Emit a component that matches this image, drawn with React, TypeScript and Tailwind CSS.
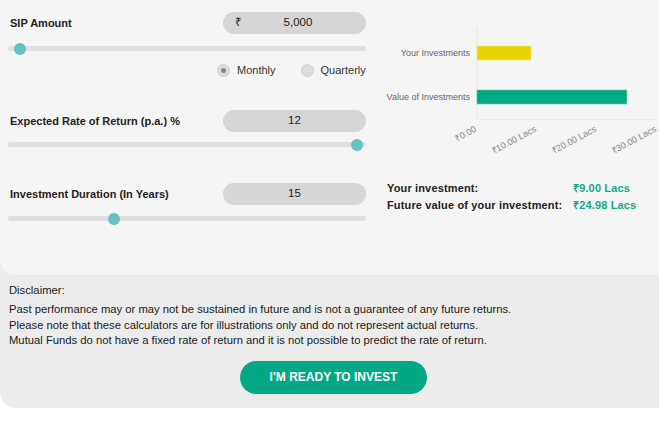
import React from 'react';

const font = { fontFamily: '"Liberation Sans", Arial, sans-serif' };

// thumb centre, px from the track's left edge
const Slider = ({ at }: { at: number }) => (
  <div className="relative h-[5px] w-[358px] rounded-full bg-[#e0e0e0]">
    <div
      className="absolute top-[-3.5px] h-[12px] w-[12px] rounded-full bg-[#62c3c1]"
      style={{ left: at - 6 }}
    />
  </div>
);

const Pill = ({ value, rupee }: { value: string; rupee?: boolean }) => (
  <div className="flex h-[22px] w-[143px] items-center rounded-full bg-[#d6d6d6] px-[12px] text-[11.5px] text-[#222]">
    {rupee && <span>₹</span>}
    <span className="flex-1 text-center">{value}</span>
  </div>
);

const Row = ({ label, children }: { label: string; children: React.ReactNode }) => (
  <div className="flex h-[22px] items-center justify-between">
    <span className="pl-[2px] text-[11px] font-bold text-[#222]">{label}</span>
    {children}
  </div>
);

const Radio = ({ label, checked }: { label: string; checked?: boolean }) => (
  <label className="flex items-center gap-[7px] text-[11px] text-[#333]">
    <span className="flex h-[13px] w-[13px] items-center justify-center rounded-full border border-[#cfcfcf] bg-[#dcdcdc]">
      {checked && <span className="h-[5px] w-[5px] rounded-full bg-[#888]" />}
    </span>
    {label}
  </label>
);

const Chart = () => {
  const x0 = 107;
  const per10 = 60;
  const ticks = ['₹0.00', '₹10.00 Lacs', '₹20.00 Lacs', '₹30.00 Lacs'];
  return (
    <svg width="289" height="160" className="block">
      <line x1={x0} y1={27} x2={x0} y2={119} stroke="#e6e6e6" strokeWidth="1" />
      <line x1={x0} y1={119.5} x2={289} y2={119.5} stroke="#ececec" strokeWidth="1" />
      <rect x={x0} y={46} width={(9.0 / 10) * per10} height={14} fill="#e8d400" stroke="#f0e37a" strokeWidth="0.6" />
      <rect x={x0} y={90} width={(24.98 / 10) * per10} height={14} fill="#00a884" stroke="#5fc9ad" strokeWidth="0.6" />
      <g fill="#666" fontSize="9" style={font}>
        <text x={100} y={56} textAnchor="end">Your Investments</text>
        <text x={100} y={100} textAnchor="end">Value of Investments</text>
        {ticks.map((t, i) => {
          const x = x0 + i * per10;
          return (
            <text key={t} x={x} y={131} textAnchor="end" fill="#888" transform={`rotate(-28 ${x} 131)`}>
              {t}
            </text>
          );
        })}
      </g>
    </svg>
  );
};

export default function App() {
  return (
    <div className="h-[421px] w-[659px] overflow-hidden bg-white" style={font}>
      <div className="w-[672px] rounded-b-[16px] bg-[#ececec] pb-[14px]">
        <div className="flex h-[275px] rounded-b-[16px] bg-[#f5f5f5]">
          <div className="ml-[8px] w-[358px] pt-[12px]">
            <Row label="SIP Amount">
              <Pill value="5,000" rupee />
            </Row>
            <div className="mt-[12px]">
              <Slider at={12} />
            </div>
            <div className="mt-[12px] flex h-[14px] items-center gap-[25px] pl-[209px]">
              <Radio label="Monthly" checked />
              <Radio label="Quarterly" />
            </div>

            <div className="mt-[33px]">
              <Row label="Expected Rate of Return (p.a.) %">
                <Pill value="12" />
              </Row>
            </div>
            <div className="mt-[10px]">
              <Slider at={349} />
            </div>

            <div className="mt-[36px]">
              <Row label="Investment Duration (In Years)">
                <Pill value="15" />
              </Row>
            </div>
            <div className="mt-[11px]">
              <Slider at={106} />
            </div>
          </div>

          <div className="ml-[4px] flex-1">
            <Chart />
            <div className="mt-[20px] grid grid-cols-[186px_auto] pl-[17px] text-[11px] font-bold leading-[17px] tracking-[0.15px]">
              <span className="text-[#222]">Your investment:</span>
              <span className="text-[#17a88a]">₹9.00 Lacs</span>
              <span className="text-[#222]">Future value of your investment:</span>
              <span className="text-[#17a88a]">₹24.98 Lacs</span>
            </div>
          </div>
        </div>

        <div className="w-[667px] px-[9px] pt-[7px] text-[11.25px] text-[#1a1a1a]">
          <p className="leading-[16px]">Disclaimer:</p>
          <div className="mt-[4px] leading-[15.5px]">
            <p>Past performance may or may not be sustained in future and is not a guarantee of any future returns.</p>
            <p>Please note that these calculators are for illustrations only and do not represent actual returns.</p>
            <p>Mutual Funds do not have a fixed rate of return and it is not possible to predict the rate of return.</p>
          </div>
          <div className="mt-[12px] flex justify-center">
            <button className="h-[33px] w-[187px] rounded-full bg-[#00a884] text-[12px] font-bold text-white">
              I'M READY TO INVEST
            </button>
          </div>
        </div>
      </div>
    </div>
  );
}
